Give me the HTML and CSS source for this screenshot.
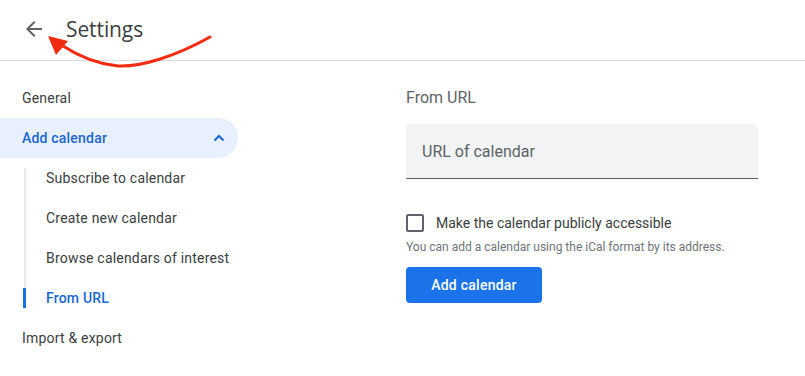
FILE: index.html
```html
<!DOCTYPE html>
<html lang="en">
<head>
<meta charset="utf-8">
<title>Settings</title>
<link rel="stylesheet" href="styles.css">
</head>
<body>
<header class="topbar">
  <button class="back" aria-label="Back">
    <svg width="24" height="24" viewBox="0 0 24 24"><path d="M20 11H7.83l5.59-5.59L12 4l-8 8 8 8 1.41-1.41L7.83 13H20v-2z" fill="#5f6368"/></svg>
  </button>
  <h1 class="title">Settings</h1>
</header>
<svg class="annot" width="220" height="75" viewBox="0 0 220 75">
  <path d="M210 37 C 176 56, 142 67, 118 66 C 96 64, 80 57, 63 46" fill="none" stroke="#f22c12" stroke-width="3" stroke-linecap="round"/>
  <path d="M48 36 L68 41 L56 55 Z" fill="#f22c12"/>
</svg>
<div class="main">
  <nav class="sidebar">
    <div class="nav-item">General</div>
    <div class="nav-item open">
      <span>Add calendar</span>
      <svg width="12" height="8" viewBox="0 0 12 8"><path d="M1.5 6.5 L6 2 L10.5 6.5" fill="none" stroke="#1967d2" stroke-width="2"/></svg>
    </div>
    <div class="sub-list">
      <div class="sub-item">Subscribe to calendar</div>
      <div class="sub-item">Create new calendar</div>
      <div class="sub-item">Browse calendars of interest</div>
      <div class="sub-item active">From URL</div>
    </div>
    <div class="nav-item">Import &amp; export</div>
  </nav>
  <section class="content">
    <h2 class="section-title">From URL</h2>
    <div class="field">URL of calendar</div>
    <label class="check-row">
      <span class="checkbox"></span>
      <span>Make the calendar publicly accessible</span>
    </label>
    <p class="help">You can add a calendar using the iCal format by its address.</p>
    <button class="primary">Add calendar</button>
  </section>
</div>
</body>
</html>
```
FILE: styles.css
```css
* { box-sizing: border-box; }
html, body { margin: 0; padding: 0; background: #fff; }
body {
  font-family: Roboto, "Noto Sans", Arial, sans-serif;
  color: #3c4043;
  width: 805px;
  height: 376px;
  overflow: hidden;
  position: relative;
}
.topbar {
  height: 61px;
  border-bottom: 1px solid #dadce0;
  display: flex;
  align-items: center;
  padding-left: 22px;
}
.back {
  width: 24px;
  height: 24px;
  padding: 0;
  border: 0;
  background: none;
  display: flex;
  margin-top: -3px;
}
.title {
  margin: -2px 0 0 20px;
  font-family: "Open Sans", Roboto, sans-serif;
  font-weight: 400;
  font-size: 21px;
  color: #3c4043;
  letter-spacing: -0.1px;
}
.annot {
  position: absolute;
  left: 0;
  top: 0;
  pointer-events: none;
}
.main {
  display: flex;
  padding-top: 17px;
}
.sidebar {
  width: 238px;
  flex: none;
  font-size: 14px;
}
.nav-item {
  height: 40px;
  display: flex;
  align-items: center;
  justify-content: space-between;
  padding: 0 13px 0 22px;
  letter-spacing: 0.2px;
}
.nav-item.open {
  background: #e8f0fe;
  color: #1967d2;
  border-radius: 0 20px 20px 0;
  font-weight: 500;
}
.sub-list {
  position: relative;
}
.sub-list::before {
  content: "";
  position: absolute;
  left: 24px;
  top: 10px;
  bottom: 10px;
  width: 2px;
  background: #e8eaed;
}
.sub-item {
  height: 40px;
  display: flex;
  align-items: center;
  padding-left: 46px;
  position: relative;
  letter-spacing: 0.2px;
}
.sub-item.active {
  color: #1967d2;
  font-weight: 500;
}
.sub-item.active::before {
  content: "";
  position: absolute;
  left: 23px;
  top: 10px;
  bottom: 10px;
  width: 3px;
  background: #1a73e8;
}
.content {
  margin-left: 168px;
  width: 352px;
}
.section-title {
  margin: 0;
  height: 38px;
  display: flex;
  align-items: center;
  font-size: 16px;
  font-weight: 400;
  color: #5f6368;
}
.field {
  margin-top: 8px;
  height: 55px;
  background: #f1f3f4;
  border-radius: 4px 4px 0 0;
  border-bottom: 1px solid #5f6368;
  display: flex;
  align-items: center;
  padding-left: 16px;
  font-size: 16px;
  color: #5f6368;
}
.check-row {
  display: flex;
  align-items: center;
  margin-top: 34px;
  font-size: 14px;
  color: #3c4043;
  height: 20px;
}
.checkbox {
  width: 18px;
  height: 18px;
  border: 2px solid #5f6368;
  border-radius: 2px;
  margin-right: 12px;
  flex: none;
}
.help {
  margin: 6px 0 0;
  font-size: 12px;
  color: #70757a;
  line-height: 16px;
}
.primary {
  margin-top: 12px;
  height: 36px;
  width: 136px;
  border: 0;
  border-radius: 4px;
  background: #1a73e8;
  color: #fff;
  font-family: Roboto, sans-serif;
  font-size: 14px;
  font-weight: 500;
  letter-spacing: 0.25px;
  display: block;
}
```
